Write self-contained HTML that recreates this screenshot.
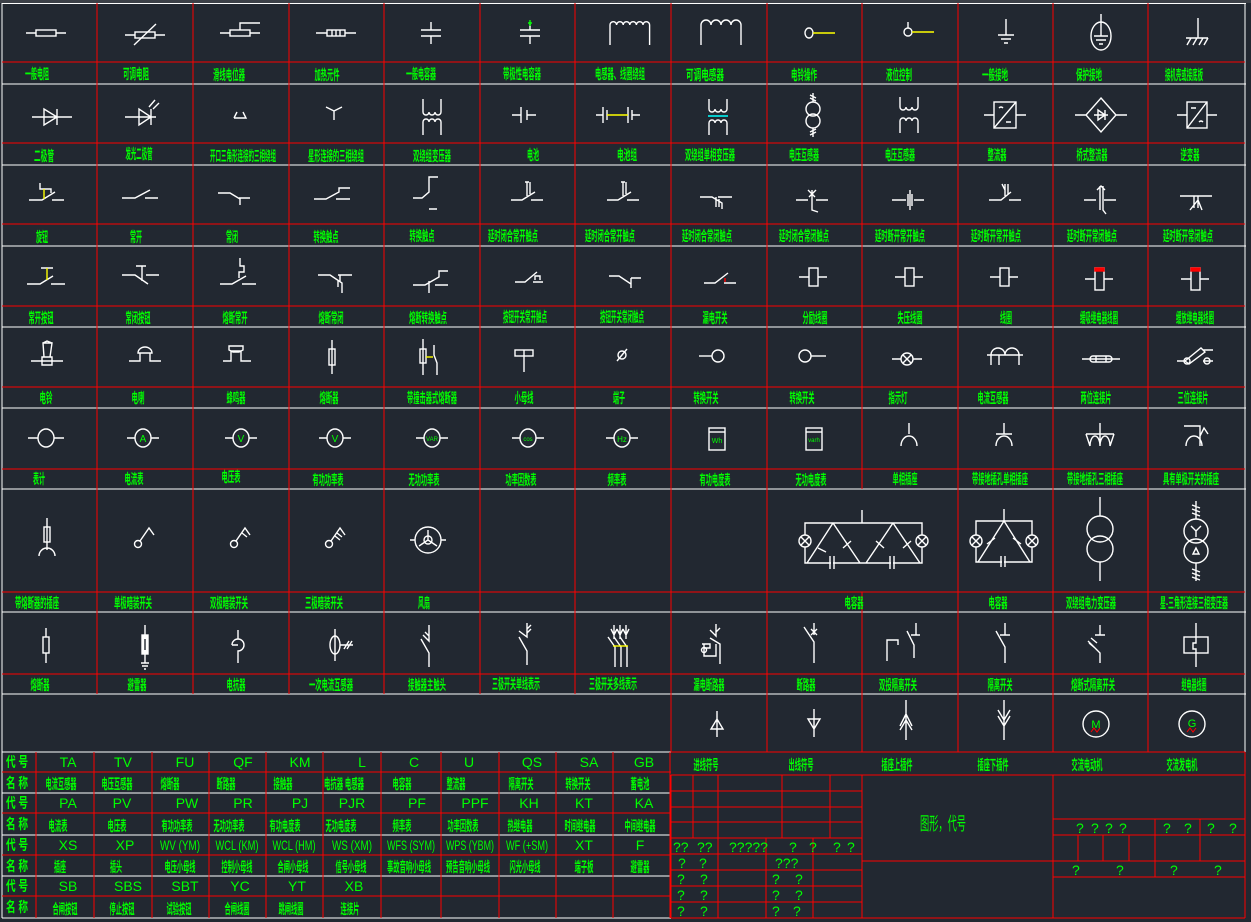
<!DOCTYPE html>
<html><head><meta charset="utf-8"><style>
html,body{margin:0;padding:0;background:#222831;}
svg{display:block}
.s{stroke:#fff;stroke-width:1.4;fill:none}
.l{fill:#00ff00;font-family:"Liberation Sans","Noto Sans CJK SC",sans-serif;font-size:14px;font-weight:bold;text-anchor:middle}
.c{fill:#00ff00;font-family:"Liberation Sans","Noto Sans CJK SC",sans-serif;font-size:14px;text-anchor:middle}
.q{fill:#00ff00;font-family:"Liberation Sans",sans-serif;font-size:14px}
.r{stroke:#ff0000;stroke-width:1;shape-rendering:crispEdges;fill:none}
.w{stroke:#fff;stroke-width:1;shape-rendering:crispEdges}
</style></head><body>
<svg width="1251" height="922" viewBox="0 0 1251 922" xmlns="http://www.w3.org/2000/svg">
<rect x="0" y="0" width="1251" height="922" fill="#222831"/>
<rect x="0" y="0" width="1251" height="3" fill="#3c4047"/>

<g class="w">
<line x1="2" y1="3.5" x2="1246" y2="3.5"/>
<line x1="2" y1="84" x2="1246" y2="84"/>
<line x1="2" y1="165" x2="1246" y2="165"/>
<line x1="2" y1="246" x2="1246" y2="246"/>
<line x1="2" y1="327" x2="1246" y2="327"/>
<line x1="2" y1="408" x2="1246" y2="408"/>
<line x1="2" y1="489" x2="1246" y2="489"/>
<line x1="2" y1="612" x2="1246" y2="612"/>
<line x1="2" y1="694" x2="1246" y2="694"/>
<line x1="2" y1="752" x2="671" y2="752"/>
<line x1="2" y1="793" x2="671" y2="793"/>
<line x1="2" y1="835" x2="671" y2="835"/>
<line x1="2" y1="876" x2="671" y2="876"/>
<line x1="2" y1="918" x2="671" y2="918"/>
<line x1="2" y1="3" x2="2" y2="918"/>
<line x1="1245" y1="3" x2="1245" y2="752"/>
</g>
<g class="r">
<line x1="2" y1="62" x2="1245" y2="62"/>
<line x1="2" y1="143" x2="1245" y2="143"/>
<line x1="2" y1="224" x2="1245" y2="224"/>
<line x1="2" y1="306" x2="1245" y2="306"/>
<line x1="2" y1="387" x2="1245" y2="387"/>
<line x1="2" y1="469" x2="1245" y2="469"/>
<line x1="2" y1="592" x2="1245" y2="592"/>
<line x1="2" y1="674" x2="1245" y2="674"/>
<line x1="671" y1="752" x2="1245" y2="752"/>
<line x1="671" y1="775" x2="1245" y2="775"/>
<line x1="2" y1="772" x2="671" y2="772"/>
<line x1="2" y1="813" x2="671" y2="813"/>
<line x1="2" y1="855" x2="671" y2="855"/>
<line x1="2" y1="896" x2="671" y2="896"/>
<line x1="671" y1="918" x2="1245" y2="918"/>
<path d="M97,3V489M193,3V489M289,3V489M384,3V489M480,3V489M575,3V489M671,3V752M767,3V489M862,3V489M958,3V752M1053,3V752M1148,3V752"/>
<path d="M97,489V694M193,489V694M289,489V694M384,489V694M480,489V694M575,489V694M767,489V752M862,592V752"/>
<path d="M36,752V918M94,752V918M152,752V918M209,752V918M266,752V918M323,752V918M381,752V918M441,752V918M499,752V918M556,752V918M613,752V918M670,752V918"/>
<path d="M671,775V918M862,775V918M1053,775V918M1245,752V918"/>
<path d="M671,791H862M671,807H862M671,822H862M671,838H862M671,854H862M671,870H862M671,886H862M671,902H862"/>
<path d="M693,775V838M718,775V918M782,775V838M830,775V838M766,838V918M813,838V918"/>
<path d="M862,861H1053M1053,819H1245M1053,835H1245M1053,861H1245M1053,877H1245"/>
<path d="M1155,819V877M1200,819V861M1078,835V861M1103,835V861M1129,835V861"/>
</g>

<g class="s">
<g transform="translate(46,33)"><path d="M-20,0H-10M10,0H20"/><rect x="-10" y="-3" width="20" height="6"/></g>
<g transform="translate(145,35)"><path d="M-20,0H-10M10,0H20M-11,10L11,-11"/><rect x="-10" y="-3" width="20" height="6"/></g>
<g transform="translate(240,33)"><path d="M-20,0H-10M10,0H20M0,-3V-10H20"/><rect x="-10" y="-3" width="20" height="6"/></g>
<g transform="translate(336,33)"><path d="M-20,0H-9M9,0H20M-4,-3V3M0,-3V3M4,-3V3"/><rect x="-9" y="-3" width="18" height="6"/></g>
<g transform="translate(431,33)"><path d="M-10,-3H10M-10,3H10M0,-11V-3M0,3V11"/></g>
<g transform="translate(530,33)"><path d="M-10,-3H10M-10,3H10M0,-11V-3M0,3V11"/><path d="M0,-13V-7M-2,-10H2" stroke="#0f0"/></g>
<g transform="translate(630,33)"><path d="M-20,12V-8a3.3,3.3 0 0 1 6.6,0a3.3,3.3 0 0 1 6.6,0a3.3,3.3 0 0 1 6.6,0a3.3,3.3 0 0 1 6.6,0a3.3,3.3 0 0 1 6.6,0a3.3,3.3 0 0 1 6.6,0V12"/></g>
<g transform="translate(721,33)"><path d="M-20,12V-8a5,5 0 0 1 10,0a5,5 0 0 1 10,0a5,5 0 0 1 10,0a5,5 0 0 1 10,0V12"/></g>
<g transform="translate(812,33)"><ellipse cx="-3" cy="0" rx="4" ry="5"/><path d="M1,0H23" stroke="#ff0"/></g>
<g transform="translate(908,32)"><circle cx="0" cy="0" r="4"/><path d="M0,-4V-10"/><path d="M4,0H26" stroke="#ff0"/></g>
<g transform="translate(1006,33)"><path d="M0,-14V2M-8,2H8M-5,6H5M-2,10H2"/></g>
<g transform="translate(1101,36)"><ellipse cx="0" cy="0" rx="10" ry="14"/><path d="M0,-22V0M-7,0H7M-5,4H5M-2,8H2"/></g>
<g transform="translate(1196,33)"><path d="M-10,5H12M2,-15V5M-5,5L-9,12M1,5L-3,12M7,5L3,12M12,5L8,12"/></g>
</g>

<g class="s">
<g transform="translate(52,117)"><path d="M-20,0H20M-8,-8V8L5,0ZM5,-8V8"/></g>
<g transform="translate(145,117)"><path d="M-20,0H11M-6,-8V8L6,0ZM6,-8V8M4,-10L10,-17M8,-8L14,-14"/></g>
<g transform="translate(240,114)"><path d="M-6,4H6L3,-2M-3,-2L-6,4"/></g>
<g transform="translate(334,112)"><path d="M-8,-5L0,-1L8,-5M0,-1V8"/></g>
<g transform="translate(432,117)"><path d="M-9,-18V-5a3,3 0 0 0 6,0a3,3 0 0 0 6,0a3,3 0 0 0 6,0V-18M-9,18V5a3,3 0 0 1 6,0a3,3 0 0 1 6,0a3,3 0 0 1 6,0V18"/></g>
<g transform="translate(524,115)"><path d="M-12,0H-3M-3,-8V8M3,-5V5M3,0H12"/></g>
<g transform="translate(618,115)"><path d="M-22,0H-15M-15,-8V8M-11,-5V5M10,-8V8M14,-5V5M14,0H22"/><path d="M-11,0H10" stroke="#ff0"/></g>
<g transform="translate(718,117)"><path d="M-9,-18V-8a3,3 0 0 0 6,0a3,3 0 0 0 6,0a3,3 0 0 0 6,0V-18M-9,18V6a3,3 0 0 1 6,0a3,3 0 0 1 6,0a3,3 0 0 1 6,0V18"/><path d="M-10,-1H10" stroke="#0ff"/></g>
<g transform="translate(813,115)"><circle cx="0" cy="-6" r="7"/><circle cx="0" cy="6" r="7"/><path d="M0,-13V-22M0,13V22M-3,-20L3,-17M-3,-17L3,-14M-3,17L3,14M-3,20L3,17"/></g>
<g transform="translate(909,115)"><path d="M-9,-18V-8a3,3 0 0 0 6,0a3,3 0 0 0 6,0a3,3 0 0 0 6,0V-18M-9,18V6a3,3 0 0 1 6,0a3,3 0 0 1 6,0a3,3 0 0 1 6,0V18"/></g>
<g transform="translate(1005,115)"><rect x="-11" y="-13" width="22" height="26"/><path d="M-21,0H-11M11,0H21M-11,13L11,-13M-6,-7q2,-2 4,0M1,7H6"/></g>
<g transform="translate(1101,115)"><path d="M-26,0H-15M15,0H26M0,-17L15,0L0,17L-15,0ZM-7,0H7M-3,-5V5L4,0ZM4,-5V5"/></g>
<g transform="translate(1197,115)"><rect x="-10" y="-13" width="20" height="26"/><path d="M-20,0H-10M10,0H20M-10,13L10,-13M-6,-7H-1M2,7q2,-2 4,0"/></g>
</g>

<g class="s">
<g transform="translate(47,195)"><path d="M-18,5H-5L8,-3M5,5H17M-7,-12V-6H4V-2"/><path d="M-3,-6V4" stroke="#ff0"/></g>
<g transform="translate(140,195)"><path d="M-18,3H-5L10,-5M5,3H18"/></g>
<g transform="translate(238,195)"><path d="M-20,-2H-8L2,4V10M1,3H12"/></g>
<g transform="translate(332,195)"><path d="M-18,4H-6L7,-3V-7H18M4,4H18"/></g>
<g transform="translate(431,192)"><path d="M-18,6H-9L-2,0V-15H7M-2,17H6"/></g>
<g transform="translate(527,194)"><path d="M-16,6H-5L8,-2M4,6H16M0,-12V2M3,-12V0M-2,-12H2"/></g>
<g transform="translate(623,194)"><path d="M-16,6H-5L8,-2M4,6H16M0,-12V2M3,-12V0M-2,-12H2"/></g>
<g transform="translate(716,199)"><path d="M-16,-2H-4L6,4V10M2,-2H16M0,-2V8M3,0V8"/></g>
<g transform="translate(812,200)"><path d="M-16,0H-4M4,0H16M0,-10V10L6,12M-4,-10L3,-3M4,-10L-3,-3"/></g>
<g transform="translate(908,200)"><path d="M-16,0H-2M6,0H16M0,-6V6M4,-6V6M2,-10V10"/></g>
<g transform="translate(1005,196)"><path d="M-16,4H-4L6,-4M4,4H16M0,-12V0M3,-12V-2M-3,-12L0,-6"/></g>
<g transform="translate(1100,200)"><path d="M-16,0H-4M4,0H16M0,-14V10M3,-14V10L6,14M-3,-10L1,-14L5,-10"/></g>
<g transform="translate(1196,200)"><path d="M-16,-4H16M-2,-4V8M2,-4V8M-6,10L2,0L6,10"/></g>
</g>

<g class="s">
<g transform="translate(47,278)"><path d="M-20,6H-7L6,-2M4,6H18M-6,-10H6"/><path d="M0,-10V2" stroke="#ff0"/></g>
<g transform="translate(142,278)"><path d="M-20,-3H-7L6,6M4,-3H17M-6,-12H4M0,-12V3"/></g>
<g transform="translate(238,278)"><path d="M-18,6H-6L8,-2M4,6H18M2,-20V-12H6V-6H1V0"/></g>
<g transform="translate(336,281)"><path d="M-18,-6H-6L6,2V12M2,-6H16M4,-6V0H2V6"/></g>
<g transform="translate(431,281)"><path d="M-18,4H-6L8,-4V-10H17M4,4H17M-2,0V6M-2,6V12"/></g>
<g transform="translate(529,276)"><path d="M-14,6H-4L8,-4M4,6H14M6,4V0H11V4"/></g>
<g transform="translate(625,278)"><path d="M-16,-2H-6L6,6V10M6,0H16M6,0V6"/></g>
<g transform="translate(720,277)"><path d="M-16,6H-5L8,-4M4,6H16"/><path d="M5,1V5" stroke="#f00"/></g>
<g transform="translate(813,277)"><rect x="-4" y="-9" width="9" height="18"/><path d="M-14,0H-4M5,0H14"/></g>
<g transform="translate(909,277)"><rect x="-4" y="-9" width="9" height="18"/><path d="M-14,0H-4M5,0H14"/></g>
<g transform="translate(1004,277)"><rect x="-4" y="-9" width="9" height="18"/><path d="M-14,0H-4M5,0H14"/></g>
<g transform="translate(1099,279)"><rect x="-4" y="-11" width="9" height="22"/><path d="M-14,0H-4M5,0H14"/><rect x="-4" y="-11" width="9" height="3" fill="#f00" stroke="#f00"/></g>
<g transform="translate(1195,279)"><rect x="-4" y="-11" width="9" height="22"/><path d="M-14,0H-4M5,0H14"/><rect x="-4" y="-11" width="9" height="3" fill="#f00" stroke="#f00"/></g>
</g>

<g class="s">
<g transform="translate(47,356)"><path d="M-16,5H16M-5,1H5V9H-5ZM-3,1L-4,-13H5L3,1M-4,-13L0,-15L5,-13"/></g>
<g transform="translate(145,356)"><path d="M-16,5H-5V-3H5V5H16M-7,-3a7,6 0 0 1 14,0Z"/></g>
<g transform="translate(237,356)"><path d="M-14,5H-6V-5H4V5H14M-8,-10H6V-6L2,-4H-4L-8,-6Z"/></g>
<g transform="translate(332,357)"><rect x="-3" y="-8" width="6" height="16"/><path d="M0,-17V17"/></g>
<g transform="translate(423,357)"><rect x="-3" y="-8" width="6" height="14"/><path d="M0,-18V18M11,-12V-2L14,6V18" /><path d="M3,0H10" stroke="#ff0"/></g>
<g transform="translate(524,355)"><rect x="-9" y="-5" width="18" height="6"/><path d="M0,-5V1M0,1V17"/></g>
<g transform="translate(622,355)"><circle cx="0" cy="0" r="4"/><path d="M-5,6L5,-6"/></g>
<g transform="translate(712,356)"><circle cx="6" cy="0" r="6"/><path d="M-13,0H0"/></g>
<g transform="translate(810,356)"><circle cx="-5" cy="0" r="6"/><path d="M1,0H16"/></g>
<g transform="translate(907,359)"><circle cx="0" cy="0" r="6"/><path d="M-15,0H-6M6,0H15M-4,-4L4,4M4,-4L-4,4"/></g>
<g transform="translate(1005,357)"><path d="M-18,-2H18M-14,8V-2a7,7 0 0 1 14,0a7,7 0 0 1 14,0V8M-6,-2V8"/></g>
<g transform="translate(1101,359)"><rect x="-11" y="-3" width="22" height="6" rx="3"/><path d="M-19,0H19M-5,-3V3M5,-3V3"/></g>
<g transform="translate(1195,358)"><path d="M-18,3H-10M-10,3L6,-10L10,-6L-6,6ZM8,-8H18M8,3H18"/><circle cx="-8" cy="3" r="3"/><circle cx="12" cy="3" r="3"/></g>
</g>

<g class="s">
<g transform="translate(46,438)"><ellipse rx="8" ry="9"/><path d="M-18,0H-8M8,0H18"/></g>
<g transform="translate(143,438)"><ellipse rx="8" ry="9"/><path d="M-16,0H-8M8,0H16"/><text x="0" y="4" fill="#0f0" stroke="none" font-size="10" text-anchor="middle" font-family="Liberation Sans">A</text></g>
<g transform="translate(241,438)"><ellipse rx="8" ry="9"/><path d="M-16,0H-8M8,0H16"/><text x="0" y="4" fill="#0f0" stroke="none" font-size="10" text-anchor="middle" font-family="Liberation Sans">V</text></g>
<g transform="translate(335,438)"><ellipse rx="8" ry="9"/><path d="M-16,0H-8M8,0H16"/><text x="0" y="4" fill="#0f0" stroke="none" font-size="10" text-anchor="middle" font-family="Liberation Sans">V</text></g>
<g transform="translate(432,438)"><ellipse rx="8" ry="9"/><path d="M-16,0H-8M8,0H16"/><text x="0" y="3" fill="#0f0" stroke="none" font-size="6" text-anchor="middle" font-family="Liberation Sans">VAR</text></g>
<g transform="translate(528,438)"><ellipse rx="8" ry="9"/><path d="M-16,0H-8M8,0H16"/><text x="0" y="3" fill="#0f0" stroke="none" font-size="6" text-anchor="middle" font-family="Liberation Sans">cos</text></g>
<g transform="translate(622,438)"><ellipse rx="8" ry="9"/><path d="M-16,0H-8M8,0H16"/><text x="0" y="4" fill="#0f0" stroke="none" font-size="8" text-anchor="middle" font-family="Liberation Sans">Hz</text></g>
<g transform="translate(717,439)"><rect x="-8" y="-11" width="16" height="22"/><path d="M-8,-7H8"/><text x="0" y="4" fill="#0f0" stroke="none" font-size="7" text-anchor="middle" font-family="Liberation Sans">Wh</text></g>
<g transform="translate(814,439)"><rect x="-8" y="-11" width="16" height="22"/><path d="M-8,-7H8"/><text x="0" y="3" fill="#0f0" stroke="none" font-size="6" text-anchor="middle" font-family="Liberation Sans">varh</text></g>
<g transform="translate(909,440)"><path d="M0,-17V-6M-8,6a8,10 0 0 1 16,0"/></g>
<g transform="translate(1004,440)"><path d="M0,-17V-6M-8,-6H8M-8,6a8,10 0 0 1 16,0"/></g>
<g transform="translate(1100,440)"><path d="M0,-17V6M-14,-6H14M-14,-6L-10,6M14,-6L10,6M-10,6a5,10 0 0 1 10,0a5,10 0 0 1 10,0"/></g>
<g transform="translate(1194,440)"><path d="M-10,-14H6V6M-8,6a8,10 0 0 1 16,0M6,-4L10,-12L14,-6"/></g>
</g>

<g class="s">
<g transform="translate(47,540)"><rect x="-3" y="-13" width="6" height="15"/><path d="M0,-22V10M-8,16a8,8 0 0 1 16,0"/></g>
<g transform="translate(143,540)"><circle cx="-5" cy="4" r="3.5"/><path d="M-3,1L6,-12L11,-5"/></g>
<g transform="translate(239,540)"><circle cx="-5" cy="4" r="3.5"/><path d="M-3,1L6,-12L11,-5M3,-7L8,-3"/></g>
<g transform="translate(334,540)"><circle cx="-5" cy="4" r="3.5"/><path d="M-3,1L6,-12L11,-5M3,-7L8,-3M1,-4L6,0"/></g>
<g transform="translate(428,540)"><circle r="13"/><path d="M-18,0H-13M13,0H18M0,-10V0L-9,6M0,0L9,6"/><circle r="4"/></g>
<path d="M805,523H922V563H805ZM862,510V523M833,523L807,563M833,523L860,563M893,523L866,563M893,523L920,563M818,548L826,552M843,548L851,541M876,541L884,548M903,548L911,541"/>
<path d="M830,556V569M834,556V569M890,556V569M894,556V569" />
<rect x="831" y="557" width="2" height="12" fill="#222831" stroke="none"/>
<rect x="891" y="557" width="2" height="12" fill="#222831" stroke="none"/>
<circle cx="805" cy="541" r="6" fill="#222831"/><path d="M801,537L809,545M809,537L801,545"/>
<circle cx="922" cy="541" r="6" fill="#222831"/><path d="M918,537L926,545M926,537L918,545"/>
<path d="M976,521H1032V562H976ZM1004,509V521M1004,521L978,562M1004,521L1030,562M1001,556V567M1005,556V567M987,544L995,538M1013,538L1021,544"/>
<rect x="1002" y="556" width="2" height="12" fill="#222831" stroke="none"/>
<circle cx="976" cy="541" r="6" fill="#222831"/><path d="M972,537L980,545M980,537L972,545"/>
<circle cx="1032" cy="541" r="6" fill="#222831"/><path d="M1028,537L1036,545M1036,537L1028,545"/>
<g transform="translate(1100,539)"><circle cx="0" cy="-10" r="13"/><circle cx="0" cy="10" r="13"/><path d="M0,-23V-42M0,23V42"/></g>
<g transform="translate(1196,541)"><circle cx="0" cy="-10" r="12"/><circle cx="0" cy="10" r="12"/><path d="M0,-22V-40M0,22V40M-4,-36L4,-33M-4,-32L4,-29M-4,-28L4,-25M-4,28L4,31M-4,32L4,35M-4,36L4,39M0,-10V-4M0,-10L-5,-15M0,-10L5,-15M-3,13L0,7L3,13Z"/></g>
</g>

<g class="s">
<g transform="translate(46,645)"><rect x="-3" y="-8" width="6" height="16"/><path d="M0,-17V-8M0,8V18"/></g>
<g transform="translate(145,645)"><rect x="-3" y="-10" width="6" height="19" fill="#fff"/><path d="M0,-20V18M-4,18H4M-3,21H3M-1,24H1"/><path d="M0,-6V5" stroke="#222831"/></g>
<g transform="translate(238,645)"><path d="M0,-15V-6M-6,0a6,6 0 1 1 6,6V18M-6,0H0"/></g>
<g transform="translate(335,645)"><ellipse rx="5" ry="9"/><path d="M0,-16V16M5,0H18M9,4L14,-4M12,4L17,-4"/></g>
<g transform="translate(429,645)"><path d="M0,-20V-4L-6,-10M0,-9L-4,-13M-8,-6L0,8V22"/></g>
<g transform="translate(527,643)"><path d="M0,-20V-6L-8,-12M0,-14L4,-18M0,-10L4,-14M-8,-6L0,8V22"/></g>
<g transform="translate(620,645)"><path d="M-6,-20V-6M0,-20V-6M6,-20V-6M-9,-16L-6,-10L-3,-16M-3,-16L0,-10L3,-16M3,-16L6,-10L9,-16M-12,-8L-5,2V22M-6,-8L1,2V22M0,-8L7,2V22"/><path d="M-7,1H8" stroke="#ff0"/></g>
<g transform="translate(716,648)"><path d="M0,-24V-12L-6,-18M0,-16L4,-20M-6,-10L4,-4V16M0,-4V8H-12V-4M-12,0H-6V-4H-14" /><circle cx="-12" cy="2" r="2.5"/></g>
<g transform="translate(814,645)"><path d="M0,-22V-10M-3,-16L3,-10M3,-16L-3,-10M-10,-18L0,-3V18"/></g>
<g transform="translate(898,645)"><path d="M-11,16V-5H0V0M18,-22V-10M13,-10H22M9,-14L16,0V13"/></g>
<g transform="translate(1005,645)"><path d="M0,-22V-10M-5,-10H5M-9,-14L0,2V18"/></g>
<g transform="translate(1100,645)"><path d="M0,-20V-10M-5,-10H5M-12,-4L0,8V18M-9,-7L-3,-2M-11,-2L-5,3"/></g>
<g transform="translate(1196,645)"><rect x="-12" y="-8" width="24" height="16"/><path d="M0,-22V-8M0,8V22M0,-8V-2H-3V4H0V8"/></g>
</g>

<g class="s">
<g transform="translate(717,723)"><path d="M0,-12V14M-6,6H6L0,-4Z"/></g>
<g transform="translate(814,723)"><path d="M0,-14V14M-6,-4H6L0,6Z"/></g>
<g transform="translate(906,720)"><path d="M0,-20V20M-6,10L0,0L6,10M-6,6L0,-6L6,6"/></g>
<g transform="translate(1004,720)"><path d="M0,-20V20M-6,-10L0,0L6,-10M-6,-4L0,6L6,-4"/></g>
<g transform="translate(1096,724)"><circle r="13"/><text x="0" y="4" fill="#0f0" stroke="none" font-size="11" text-anchor="middle" font-family="Liberation Sans">M</text><path d="M-5,8l3,-4l3,4l3,-4" stroke="#f00" stroke-width="1"/></g>
<g transform="translate(1192,724)"><circle r="13"/><text x="0" y="3" fill="#0f0" stroke="none" font-size="11" text-anchor="middle" font-family="Liberation Sans">G</text><path d="M-5,8l3,-4l3,4l3,-4" stroke="#f00" stroke-width="1"/></g>
</g>

<g class="l">
<text x="37" y="79" textLength="24" lengthAdjust="spacingAndGlyphs">一般电阻</text>
<text x="136" y="79" textLength="26" lengthAdjust="spacingAndGlyphs">可调电阻</text>
<text x="229" y="80" textLength="32" lengthAdjust="spacingAndGlyphs">滑线电位器</text>
<text x="327" y="80" textLength="25" lengthAdjust="spacingAndGlyphs">加热元件</text>
<text x="421" y="79" textLength="30" lengthAdjust="spacingAndGlyphs">一般电容器</text>
<text x="522" y="79" textLength="38" lengthAdjust="spacingAndGlyphs">带极性电容器</text>
<text x="620" y="79" textLength="50" lengthAdjust="spacingAndGlyphs">电感器、线圈绕组</text>
<text x="705" y="80" textLength="38" lengthAdjust="spacingAndGlyphs">可调电感器</text>
<text x="804" y="80" textLength="26" lengthAdjust="spacingAndGlyphs">电铃操作</text>
<text x="899" y="80" textLength="26" lengthAdjust="spacingAndGlyphs">液位控制</text>
<text x="995" y="80" textLength="26" lengthAdjust="spacingAndGlyphs">一般接地</text>
<text x="1089" y="80" textLength="26" lengthAdjust="spacingAndGlyphs">保护接地</text>
<text x="1184" y="80" textLength="38" lengthAdjust="spacingAndGlyphs">接机壳或接底板</text>

<text x="44" y="161" textLength="20" lengthAdjust="spacingAndGlyphs">二极管</text>
<text x="139" y="159" textLength="27" lengthAdjust="spacingAndGlyphs">发光二极管</text>
<text x="243" y="161" textLength="66" lengthAdjust="spacingAndGlyphs">开口三角形连接的三相绕组</text>
<text x="336" y="161" textLength="56" lengthAdjust="spacingAndGlyphs">星形连接的三相绕组</text>
<text x="432" y="161" textLength="38" lengthAdjust="spacingAndGlyphs">双绕组变压器</text>
<text x="533" y="160" textLength="12" lengthAdjust="spacingAndGlyphs">电池</text>
<text x="627" y="160" textLength="20" lengthAdjust="spacingAndGlyphs">电池组</text>
<text x="710" y="160" textLength="50" lengthAdjust="spacingAndGlyphs">双绕组单相变压器</text>
<text x="804" y="160" textLength="30" lengthAdjust="spacingAndGlyphs">电压互感器</text>
<text x="900" y="160" textLength="30" lengthAdjust="spacingAndGlyphs">电压互感器</text>
<text x="997" y="160" textLength="19" lengthAdjust="spacingAndGlyphs">整流器</text>
<text x="1092" y="160" textLength="31" lengthAdjust="spacingAndGlyphs">桥式整流器</text>
<text x="1190" y="160" textLength="19" lengthAdjust="spacingAndGlyphs">逆变器</text>

<text x="42" y="242" textLength="12" lengthAdjust="spacingAndGlyphs">旋钮</text>
<text x="136" y="242" textLength="12" lengthAdjust="spacingAndGlyphs">常开</text>
<text x="232" y="242" textLength="12" lengthAdjust="spacingAndGlyphs">常闭</text>
<text x="326" y="242" textLength="25" lengthAdjust="spacingAndGlyphs">转换触点</text>
<text x="422" y="241" textLength="25" lengthAdjust="spacingAndGlyphs">转换触点</text>
<text x="513" y="241" textLength="50" lengthAdjust="spacingAndGlyphs">延时闭合常开触点</text>
<text x="610" y="241" textLength="50" lengthAdjust="spacingAndGlyphs">延时闭合常开触点</text>
<text x="707" y="241" textLength="50" lengthAdjust="spacingAndGlyphs">延时闭合常闭触点</text>
<text x="804" y="241" textLength="50" lengthAdjust="spacingAndGlyphs">延时闭合常闭触点</text>
<text x="900" y="241" textLength="50" lengthAdjust="spacingAndGlyphs">延时断开常开触点</text>
<text x="996" y="241" textLength="50" lengthAdjust="spacingAndGlyphs">延时断开常开触点</text>
<text x="1092" y="241" textLength="50" lengthAdjust="spacingAndGlyphs">延时断开常闭触点</text>
<text x="1188" y="241" textLength="50" lengthAdjust="spacingAndGlyphs">延时断开常闭触点</text>

<text x="41" y="323" textLength="25" lengthAdjust="spacingAndGlyphs">常开按钮</text>
<text x="138" y="323" textLength="25" lengthAdjust="spacingAndGlyphs">常闭按钮</text>
<text x="235" y="323" textLength="25" lengthAdjust="spacingAndGlyphs">熔断常开</text>
<text x="331" y="323" textLength="25" lengthAdjust="spacingAndGlyphs">熔断常闭</text>
<text x="428" y="323" textLength="38" lengthAdjust="spacingAndGlyphs">熔断转换触点</text>
<text x="525" y="322" textLength="44" lengthAdjust="spacingAndGlyphs">按钮开关常开触点</text>
<text x="622" y="322" textLength="44" lengthAdjust="spacingAndGlyphs">按钮开关常闭触点</text>
<text x="715" y="323" textLength="25" lengthAdjust="spacingAndGlyphs">漏电开关</text>
<text x="815" y="323" textLength="25" lengthAdjust="spacingAndGlyphs">分励线圈</text>
<text x="910" y="323" textLength="25" lengthAdjust="spacingAndGlyphs">失压线圈</text>
<text x="1006" y="323" textLength="12" lengthAdjust="spacingAndGlyphs">线圈</text>
<text x="1099" y="323" textLength="38" lengthAdjust="spacingAndGlyphs">缓吸继电器线圈</text>
<text x="1195" y="323" textLength="38" lengthAdjust="spacingAndGlyphs">缓放继电器线圈</text>

<text x="46" y="403" textLength="13" lengthAdjust="spacingAndGlyphs">电铃</text>
<text x="138" y="403" textLength="13" lengthAdjust="spacingAndGlyphs">电喇</text>
<text x="236" y="403" textLength="19" lengthAdjust="spacingAndGlyphs">蜂鸣器</text>
<text x="329" y="403" textLength="19" lengthAdjust="spacingAndGlyphs">熔断器</text>
<text x="432" y="403" textLength="50" lengthAdjust="spacingAndGlyphs">带撞击器式熔断器</text>
<text x="524" y="403" textLength="19" lengthAdjust="spacingAndGlyphs">小母线</text>
<text x="619" y="403" textLength="12" lengthAdjust="spacingAndGlyphs">端子</text>
<text x="706" y="403" textLength="25" lengthAdjust="spacingAndGlyphs">转换开关</text>
<text x="802" y="403" textLength="25" lengthAdjust="spacingAndGlyphs">转换开关</text>
<text x="898" y="403" textLength="19" lengthAdjust="spacingAndGlyphs">指示灯</text>
<text x="993" y="403" textLength="31" lengthAdjust="spacingAndGlyphs">电流互感器</text>
<text x="1096" y="403" textLength="31" lengthAdjust="spacingAndGlyphs">两位连接片</text>
<text x="1193" y="403" textLength="31" lengthAdjust="spacingAndGlyphs">三位连接片</text>

<text x="39" y="484" textLength="12" lengthAdjust="spacingAndGlyphs">表计</text>
<text x="134" y="484" textLength="19" lengthAdjust="spacingAndGlyphs">电流表</text>
<text x="231" y="482" textLength="19" lengthAdjust="spacingAndGlyphs">电压表</text>
<text x="328" y="485" textLength="31" lengthAdjust="spacingAndGlyphs">有功功率表</text>
<text x="424" y="485" textLength="31" lengthAdjust="spacingAndGlyphs">无功功率表</text>
<text x="521" y="485" textLength="31" lengthAdjust="spacingAndGlyphs">功率因数表</text>
<text x="617" y="485" textLength="19" lengthAdjust="spacingAndGlyphs">频率表</text>
<text x="715" y="485" textLength="31" lengthAdjust="spacingAndGlyphs">有功电度表</text>
<text x="811" y="485" textLength="31" lengthAdjust="spacingAndGlyphs">无功电度表</text>
<text x="905" y="484" textLength="25" lengthAdjust="spacingAndGlyphs">单相插座</text>
<text x="1000" y="484" textLength="56" lengthAdjust="spacingAndGlyphs">带接地插孔单相插座</text>
<text x="1095" y="484" textLength="56" lengthAdjust="spacingAndGlyphs">带接地插孔三相插座</text>
<text x="1191" y="484" textLength="56" lengthAdjust="spacingAndGlyphs">具有单极开关的插座</text>

<text x="37" y="608" textLength="44" lengthAdjust="spacingAndGlyphs">带熔断器的插座</text>
<text x="133" y="608" textLength="38" lengthAdjust="spacingAndGlyphs">单极暗装开关</text>
<text x="229" y="608" textLength="38" lengthAdjust="spacingAndGlyphs">双极暗装开关</text>
<text x="324" y="608" textLength="38" lengthAdjust="spacingAndGlyphs">三极暗装开关</text>
<text x="424" y="608" textLength="12" lengthAdjust="spacingAndGlyphs">风扇</text>
<text x="854" y="608" textLength="19" lengthAdjust="spacingAndGlyphs">电容器</text>
<text x="998" y="608" textLength="19" lengthAdjust="spacingAndGlyphs">电容器</text>
<text x="1091" y="608" textLength="50" lengthAdjust="spacingAndGlyphs">双绕组电力变压器</text>
<text x="1194" y="608" textLength="68" lengthAdjust="spacingAndGlyphs">星-三角形连接三相变压器</text>

<text x="40" y="690" textLength="19" lengthAdjust="spacingAndGlyphs">熔断器</text>
<text x="137" y="690" textLength="19" lengthAdjust="spacingAndGlyphs">避雷器</text>
<text x="236" y="690" textLength="19" lengthAdjust="spacingAndGlyphs">电抗器</text>
<text x="331" y="690" textLength="44" lengthAdjust="spacingAndGlyphs">一次电流互感器</text>
<text x="427" y="690" textLength="38" lengthAdjust="spacingAndGlyphs">接触器主触头</text>
<text x="516" y="689" textLength="48" lengthAdjust="spacingAndGlyphs">三极开关单线表示</text>
<text x="613" y="689" textLength="48" lengthAdjust="spacingAndGlyphs">三极开关多线表示</text>
<text x="709" y="690" textLength="31" lengthAdjust="spacingAndGlyphs">漏电断路器</text>
<text x="806" y="690" textLength="19" lengthAdjust="spacingAndGlyphs">断路器</text>
<text x="898" y="690" textLength="38" lengthAdjust="spacingAndGlyphs">双投隔离开关</text>
<text x="1000" y="690" textLength="25" lengthAdjust="spacingAndGlyphs">隔离开关</text>
<text x="1093" y="690" textLength="44" lengthAdjust="spacingAndGlyphs">熔断式隔离开关</text>
<text x="1194" y="690" textLength="25" lengthAdjust="spacingAndGlyphs">继电器线圈</text>

<text x="706" y="770" textLength="25" lengthAdjust="spacingAndGlyphs">进线符号</text>
<text x="801" y="770" textLength="25" lengthAdjust="spacingAndGlyphs">出线符号</text>
<text x="897" y="770" textLength="31" lengthAdjust="spacingAndGlyphs">插座上插件</text>
<text x="993" y="770" textLength="31" lengthAdjust="spacingAndGlyphs">插座下插件</text>
<text x="1087" y="770" textLength="31" lengthAdjust="spacingAndGlyphs">交流电动机</text>
<text x="1182" y="770" textLength="31" lengthAdjust="spacingAndGlyphs">交流发电机</text>
</g>

<g class="l">
<text x="17" y="767" textLength="22" lengthAdjust="spacingAndGlyphs">代 号</text>
<text x="17" y="788" textLength="22" lengthAdjust="spacingAndGlyphs">名 称</text>
<text x="17" y="808" textLength="22" lengthAdjust="spacingAndGlyphs">代 号</text>
<text x="17" y="829" textLength="22" lengthAdjust="spacingAndGlyphs">名 称</text>
<text x="17" y="850" textLength="22" lengthAdjust="spacingAndGlyphs">代 号</text>
<text x="17" y="871" textLength="22" lengthAdjust="spacingAndGlyphs">名 称</text>
<text x="17" y="891" textLength="22" lengthAdjust="spacingAndGlyphs">代 号</text>
<text x="17" y="912" textLength="22" lengthAdjust="spacingAndGlyphs">名 称</text>

<text x="61" y="789" textLength="31" lengthAdjust="spacingAndGlyphs">电流互感器</text>
<text x="117" y="789" textLength="31" lengthAdjust="spacingAndGlyphs">电压互感器</text>
<text x="170" y="789" textLength="19" lengthAdjust="spacingAndGlyphs">熔断器</text>
<text x="226" y="789" textLength="19" lengthAdjust="spacingAndGlyphs">断路器</text>
<text x="283" y="789" textLength="19" lengthAdjust="spacingAndGlyphs">接触器</text>
<text x="344" y="789" textLength="40" lengthAdjust="spacingAndGlyphs">电抗器 电感器</text>
<text x="402" y="789" textLength="19" lengthAdjust="spacingAndGlyphs">电容器</text>
<text x="456" y="789" textLength="19" lengthAdjust="spacingAndGlyphs">整流器</text>
<text x="521" y="789" textLength="25" lengthAdjust="spacingAndGlyphs">隔离开关</text>
<text x="578" y="789" textLength="25" lengthAdjust="spacingAndGlyphs">转换开关</text>
<text x="640" y="789" textLength="19" lengthAdjust="spacingAndGlyphs">蓄电池</text>

<text x="58" y="831" textLength="19" lengthAdjust="spacingAndGlyphs">电流表</text>
<text x="117" y="831" textLength="19" lengthAdjust="spacingAndGlyphs">电压表</text>
<text x="177" y="831" textLength="31" lengthAdjust="spacingAndGlyphs">有功功率表</text>
<text x="229" y="831" textLength="31" lengthAdjust="spacingAndGlyphs">无功功率表</text>
<text x="285" y="831" textLength="31" lengthAdjust="spacingAndGlyphs">有功电度表</text>
<text x="341" y="831" textLength="31" lengthAdjust="spacingAndGlyphs">无功电度表</text>
<text x="402" y="831" textLength="19" lengthAdjust="spacingAndGlyphs">频率表</text>
<text x="463" y="831" textLength="31" lengthAdjust="spacingAndGlyphs">功率因数表</text>
<text x="520" y="831" textLength="25" lengthAdjust="spacingAndGlyphs">热继电器</text>
<text x="580" y="831" textLength="31" lengthAdjust="spacingAndGlyphs">时间继电器</text>
<text x="640" y="831" textLength="31" lengthAdjust="spacingAndGlyphs">中间继电器</text>

<text x="60" y="872" textLength="12" lengthAdjust="spacingAndGlyphs">插座</text>
<text x="116" y="872" textLength="12" lengthAdjust="spacingAndGlyphs">插头</text>
<text x="180" y="872" textLength="31" lengthAdjust="spacingAndGlyphs">电压小母线</text>
<text x="237" y="872" textLength="31" lengthAdjust="spacingAndGlyphs">控制小母线</text>
<text x="293" y="872" textLength="31" lengthAdjust="spacingAndGlyphs">合闸小母线</text>
<text x="351" y="872" textLength="31" lengthAdjust="spacingAndGlyphs">信号小母线</text>
<text x="409" y="872" textLength="44" lengthAdjust="spacingAndGlyphs">事故音响小母线</text>
<text x="468" y="872" textLength="44" lengthAdjust="spacingAndGlyphs">预告音响小母线</text>
<text x="525" y="872" textLength="31" lengthAdjust="spacingAndGlyphs">闪光小母线</text>
<text x="584" y="872" textLength="19" lengthAdjust="spacingAndGlyphs">端子板</text>
<text x="640" y="872" textLength="19" lengthAdjust="spacingAndGlyphs">避雷器</text>

<text x="65" y="914" textLength="25" lengthAdjust="spacingAndGlyphs">合闸按钮</text>
<text x="122" y="914" textLength="25" lengthAdjust="spacingAndGlyphs">停止按钮</text>
<text x="179" y="914" textLength="25" lengthAdjust="spacingAndGlyphs">试验按钮</text>
<text x="237" y="914" textLength="25" lengthAdjust="spacingAndGlyphs">合闸线圈</text>
<text x="291" y="914" textLength="25" lengthAdjust="spacingAndGlyphs">跳闸线圈</text>
<text x="350" y="914" textLength="19" lengthAdjust="spacingAndGlyphs">连接片</text>
</g>
<g class="c">
<text x="68" y="767">TA</text><text x="123" y="767">TV</text><text x="185" y="767">FU</text><text x="243" y="767">QF</text><text x="300" y="767">KM</text><text x="362" y="767">L</text><text x="414" y="767">C</text><text x="469" y="767">U</text><text x="532" y="767">QS</text><text x="589" y="767">SA</text><text x="644" y="767">GB</text>
<text x="68" y="808">PA</text><text x="122" y="808">PV</text><text x="187" y="808">PW</text><text x="243" y="808">PR</text><text x="300" y="808">PJ</text><text x="352" y="808">PJR</text><text x="417" y="808">PF</text><text x="475" y="808">PPF</text><text x="529" y="808">KH</text><text x="584" y="808">KT</text><text x="644" y="808">KA</text>
<text x="68" y="850">XS</text><text x="125" y="850">XP</text><text x="180" y="850" textLength="40" lengthAdjust="spacingAndGlyphs">WV (YM)</text><text x="237" y="850" textLength="43" lengthAdjust="spacingAndGlyphs">WCL (KM)</text><text x="294" y="850" textLength="43" lengthAdjust="spacingAndGlyphs">WCL (HM)</text><text x="352" y="850" textLength="40" lengthAdjust="spacingAndGlyphs">WS (XM)</text><text x="411" y="850" textLength="48" lengthAdjust="spacingAndGlyphs">WFS (SYM)</text><text x="470" y="850" textLength="48" lengthAdjust="spacingAndGlyphs">WPS (YBM)</text><text x="527" y="850" textLength="42" lengthAdjust="spacingAndGlyphs">WF (+SM)</text><text x="584" y="850">XT</text><text x="640" y="850">F</text>
<text x="68" y="891">SB</text><text x="128" y="891">SBS</text><text x="185" y="891">SBT</text><text x="240" y="891">YC</text><text x="297" y="891">YT</text><text x="354" y="891">XB</text>
</g>

<text x="920" y="830" fill="#00ff00" font-family="Liberation Sans,Noto Sans CJK SC,sans-serif" font-size="18" textLength="46" lengthAdjust="spacingAndGlyphs">图形，代号</text>
<g class="q">
<text x="673" y="852">??</text><text x="697" y="852">??</text><text x="729" y="852">?????</text><text x="789" y="852">?</text><text x="809" y="852">?</text><text x="833" y="852">?</text><text x="847" y="852">?</text>
<text x="678" y="868">?</text><text x="699" y="868">?</text><text x="775" y="868">???</text>
<text x="677" y="884">?</text><text x="700" y="884">?</text><text x="772" y="884">?</text><text x="795" y="884">?</text>
<text x="677" y="900">?</text><text x="700" y="900">?</text><text x="772" y="900">?</text><text x="795" y="900">?</text>
<text x="677" y="916">?</text><text x="700" y="916">?</text><text x="772" y="916">?</text><text x="793" y="916">?</text>
<text x="1076" y="833">?</text><text x="1091" y="833">?</text><text x="1105" y="833">?</text><text x="1119" y="833">?</text><text x="1163" y="833">?</text><text x="1184" y="833">?</text><text x="1207" y="833">?</text><text x="1229" y="833">?</text>
<text x="1072" y="875">?</text><text x="1116" y="875">?</text><text x="1170" y="875">?</text><text x="1214" y="875">?</text>
</g>
</svg>
</body></html>
